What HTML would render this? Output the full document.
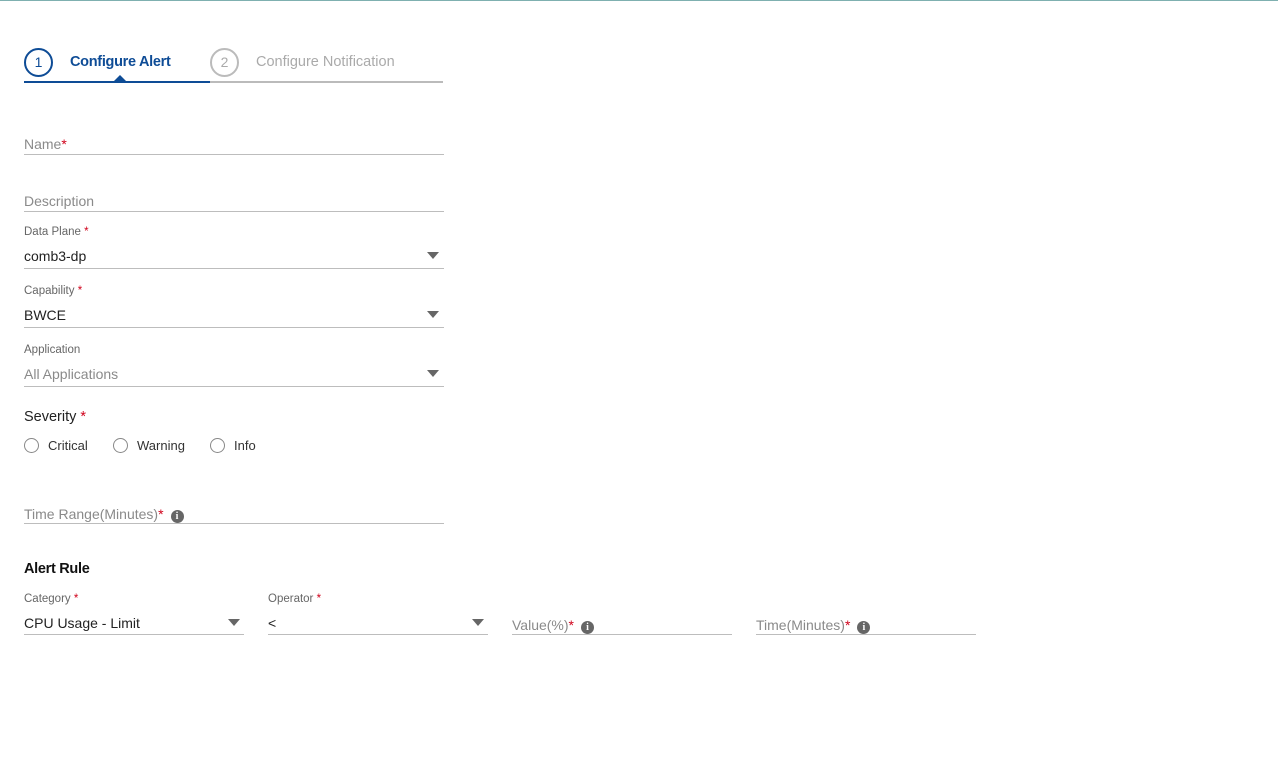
<!DOCTYPE html>
<html><head><style>
body{margin:0;width:1278px;height:783px;background:#fff;font-family:"Liberation Sans",sans-serif;position:relative;overflow:hidden;border-top:1px solid #7fb0b0;box-sizing:border-box}
.a{position:absolute;white-space:nowrap}
.ph{color:#8a8a8a;font-size:14px}
.lb{color:#666;font-size:11.5px}
.v{color:#222;font-size:14px}
.ln{position:absolute;height:1px;background:#bdbdbd}
.s{color:#d0021b}
.arr{position:absolute;width:0;height:0;border-left:6px solid transparent;border-right:6px solid transparent;border-top:7px solid #666}
.rd{position:absolute;width:13px;height:13px;border:1px solid #888;border-radius:50%}
.inf{display:inline-block;width:13px;height:13px;border-radius:50%;background:#666;color:#fff;font-size:10px;font-weight:bold;text-align:center;line-height:13px;vertical-align:0px;margin-left:7px;font-family:"Liberation Serif",serif}
</style></head><body>
<div class="a" style="left:24px;top:47px;width:29px;height:29px;border:2px solid #0e4c96;border-radius:50%;box-sizing:border-box;text-align:center;line-height:25px;color:#0e4c96;font-size:14px">1</div>
<div class="a" style="left:70px;top:53px;color:#0e4c96;font-weight:bold;font-size:14.5px;letter-spacing:-0.3px">Configure Alert</div>
<div class="a" style="left:210px;top:47px;width:29px;height:29px;border:2px solid #bbb;border-radius:50%;box-sizing:border-box;text-align:center;line-height:25px;color:#aaa;font-size:14px">2</div>
<div class="a" style="left:256px;top:53px;color:#aaa;font-size:14.5px">Configure Notification</div>
<div class="ln" style="left:24px;top:80px;width:186px;height:2px;background:#0e4c96"></div>
<div class="ln" style="left:210px;top:80px;width:233px;height:2px;background:#bbb"></div>
<div class="a" style="left:114px;top:74px;border-left:6px solid transparent;border-right:6px solid transparent;border-bottom:6px solid #0e4c96"></div>

<div class="a ph" style="left:24px;top:135px">Name<span class="s">*</span></div>
<div class="ln" style="left:24px;top:153px;width:420px"></div>
<div class="a ph" style="left:24px;top:192px">Description</div>
<div class="ln" style="left:24px;top:210px;width:420px"></div>

<div class="a lb" style="left:24px;top:225px">Data Plane <span class="s">*</span></div>
<div class="a v" style="left:24px;top:247px">comb3-dp</div>
<div class="arr" style="left:427px;top:251px"></div>
<div class="ln" style="left:24px;top:267px;width:420px"></div>

<div class="a lb" style="left:24px;top:284px">Capability <span class="s">*</span></div>
<div class="a v" style="left:24px;top:306px">BWCE</div>
<div class="arr" style="left:427px;top:310px"></div>
<div class="ln" style="left:24px;top:326px;width:420px"></div>

<div class="a lb" style="left:24px;top:343px">Application</div>
<div class="a ph" style="left:24px;top:365px">All Applications</div>
<div class="arr" style="left:427px;top:369px"></div>
<div class="ln" style="left:24px;top:385px;width:420px"></div>

<div class="a v" style="left:24px;top:408px;font-size:14.5px">Severity <span class="s">*</span></div>
<div class="rd" style="left:24px;top:437px"></div><div class="a" style="left:48px;top:437px;font-size:13px;color:#333">Critical</div>
<div class="rd" style="left:113px;top:437px"></div><div class="a" style="left:137px;top:437px;font-size:13px;color:#333">Warning</div>
<div class="rd" style="left:210px;top:437px"></div><div class="a" style="left:234px;top:437px;font-size:13px;color:#333">Info</div>

<div class="a ph" style="left:24px;top:505px">Time Range(Minutes)<span class="s">*</span><span class="inf">i</span></div>
<div class="ln" style="left:24px;top:522px;width:420px"></div>

<div class="a" style="left:24px;top:560px;font-weight:bold;font-size:14.5px;color:#111;letter-spacing:-0.3px">Alert Rule</div>

<div class="a lb" style="left:24px;top:592px">Category <span class="s">*</span></div>
<div class="a v" style="left:24px;top:614px">CPU Usage - Limit</div>
<div class="arr" style="left:228px;top:618px"></div>
<div class="ln" style="left:24px;top:633px;width:220px"></div>

<div class="a lb" style="left:268px;top:592px">Operator <span class="s">*</span></div>
<div class="a v" style="left:268px;top:614px">&lt;</div>
<div class="arr" style="left:472px;top:618px"></div>
<div class="ln" style="left:268px;top:633px;width:220px"></div>

<div class="a ph" style="left:512px;top:616px">Value(%)<span class="s">*</span><span class="inf">i</span></div>
<div class="ln" style="left:512px;top:633px;width:220px"></div>
<div class="a ph" style="left:756px;top:616px">Time(Minutes)<span class="s">*</span><span class="inf">i</span></div>
<div class="ln" style="left:756px;top:633px;width:220px"></div>
</body></html>
